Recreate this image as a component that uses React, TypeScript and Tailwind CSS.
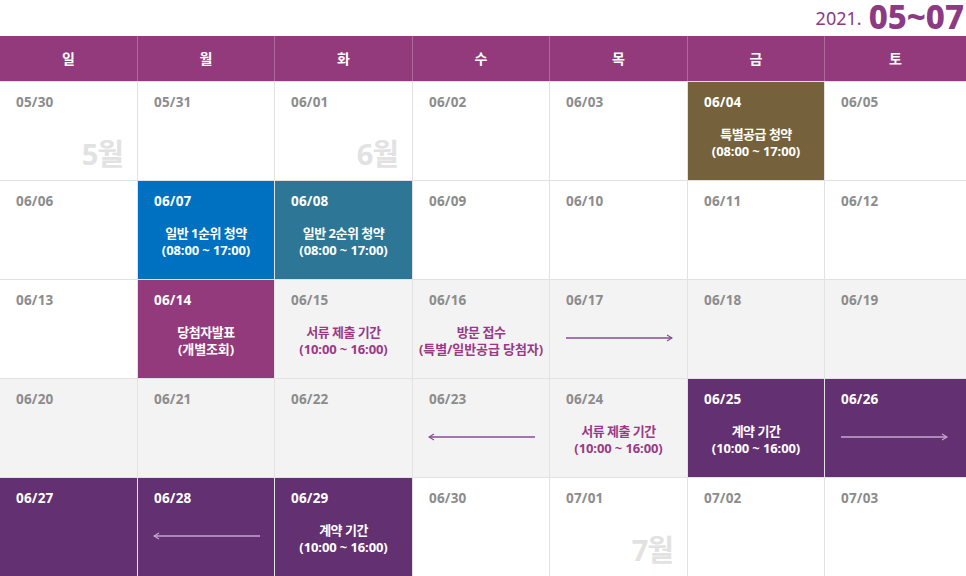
import React from "react";

// 청약 일정 캘린더
type Tone = "white" | "gray" | "olive" | "blue" | "teal" | "pink" | "purple";

type Day = {
    date: string;
    tone: Tone;
    title?: string;
    sub?: string;
    arrow?: "left" | "right";
    month?: string;
};

const toneClass: Record<Tone, string> = {
    white: "bg-white text-[#8c8c8c]",
    gray: "bg-[#f3f3f3] text-[#8c8c8c]",
    olive: "bg-[#75623d] text-white",
    blue: "bg-[#0070c0] text-white",
    teal: "bg-[#2d7696] text-white",
    pink: "bg-[#923a7c] text-white",
    purple: "bg-[#633071] text-white",
};

const weeks: Day[][] = [
    [
        { date: "05/30", tone: "white", month: "5월" },
        { date: "05/31", tone: "white" },
        { date: "06/01", tone: "white", month: "6월" },
        { date: "06/02", tone: "white" },
        { date: "06/03", tone: "white" },
        { date: "06/04", tone: "olive", title: "특별공급 청약", sub: "(08:00 ~ 17:00)" },
        { date: "06/05", tone: "white" },
    ],
    [
        { date: "06/06", tone: "white" },
        { date: "06/07", tone: "blue", title: "일반 1순위 청약", sub: "(08:00 ~ 17:00)" },
        { date: "06/08", tone: "teal", title: "일반 2순위 청약", sub: "(08:00 ~ 17:00)" },
        { date: "06/09", tone: "white" },
        { date: "06/10", tone: "white" },
        { date: "06/11", tone: "white" },
        { date: "06/12", tone: "white" },
    ],
    [
        { date: "06/13", tone: "white" },
        { date: "06/14", tone: "pink", title: "당첨자발표", sub: "(개별조회)" },
        { date: "06/15", tone: "gray", title: "서류 제출 기간", sub: "(10:00 ~ 16:00)" },
        { date: "06/16", tone: "gray", title: "방문 접수", sub: "(특별/일반공급 당첨자)" },
        { date: "06/17", tone: "gray", arrow: "right" },
        { date: "06/18", tone: "gray" },
        { date: "06/19", tone: "gray" },
    ],
    [
        { date: "06/20", tone: "gray" },
        { date: "06/21", tone: "gray" },
        { date: "06/22", tone: "gray" },
        { date: "06/23", tone: "gray", arrow: "left" },
        { date: "06/24", tone: "gray", title: "서류 제출 기간", sub: "(10:00 ~ 16:00)" },
        { date: "06/25", tone: "purple", title: "계약 기간", sub: "(10:00 ~ 16:00)" },
        { date: "06/26", tone: "purple", arrow: "right" },
    ],
    [
        { date: "06/27", tone: "purple" },
        { date: "06/28", tone: "purple", arrow: "left" },
        { date: "06/29", tone: "purple", title: "계약 기간", sub: "(10:00 ~ 16:00)" },
        { date: "06/30", tone: "white" },
        { date: "07/01", tone: "white", month: "7월" },
        { date: "07/02", tone: "white" },
        { date: "07/03", tone: "white" },
    ],
];

const dayNames = ["일", "월", "화", "수", "목", "금", "토"];

const cols = "grid grid-cols-[138px_137px_138px_137px_138px_137px_1fr]";

const Arrow = ({ dir, light }: { dir: "left" | "right"; light: boolean }) => {
    const color = light ? "#c9a6d3" : "#8a4a9a";
    return (
        <svg width="108" height="8" viewBox="0 0 108 8" className="mt-[26px] ml-[15px]">
            <line x1="1" y1="4" x2="107" y2="4" stroke={color} strokeWidth="1.4" />
            {dir === "right" ? (
                <path d="M102 1 L107 4 L102 7" fill="none" stroke={color} strokeWidth="1.2" />
            ) : (
                <path d="M6 1 L1 4 L6 7" fill="none" stroke={color} strokeWidth="1.2" />
            )}
        </svg>
    );
};

const Cell = ({ day, last }: { day: Day; last: boolean }) => {
    const dark = day.tone !== "white" && day.tone !== "gray";
    return (
        <div
            className={`flex h-[99px] flex-col border-t border-[#e2e2e2] ${last ? "" : "border-r"} ${toneClass[day.tone]}`}
        >
            <div className="pl-[16px] pt-[12px] text-[13.5px] font-bold leading-[16px] tracking-[0.2px]">
                {day.date}
            </div>
            {day.title && (
                <div
                    className={`mt-[15px] flex flex-col items-center text-center font-bold ${dark ? "text-white" : "text-[#9a3a86]"}`}
                >
                    <span className="text-[13px] leading-[18px] tracking-[-0.5px]">{day.title}</span>
                    <span className="text-[13px] leading-[17px] tracking-[-0.1px]">{day.sub}</span>
                </div>
            )}
            {day.arrow && <Arrow dir={day.arrow} light={dark} />}
            {day.month && (
                <div className="mt-auto mb-[10px] mr-[14px] self-end text-[29px] font-bold leading-[32px] tracking-[-1px] text-[#e2e2e2]">
                    {day.month}
                </div>
            )}
        </div>
    );
};

const App = () => {
    return (
        <div
            className="h-[576px] w-[966px] overflow-hidden bg-white"
            style={{ fontFamily: '"Noto Sans", "Noto Sans CJK KR", sans-serif' }}
        >
            <div className="flex h-[36px] items-start justify-end text-[#8b3a84]">
                <span className="mt-[7px] mr-[7px] text-[18px] leading-[22px]">2021.</span>
                <span className="mr-[2px] text-[33px] font-extrabold leading-[34px]">05~07</span>
            </div>
            <div className={`${cols} h-[45px] bg-[#933a7c]`}>
                {dayNames.map((d, i) => (
                    <div
                        key={d}
                        className={`flex items-center justify-center text-[14px] font-bold text-white ${i < 6 ? "border-r border-[#ad6a9c]" : ""}`}
                    >
                        {d}
                    </div>
                ))}
            </div>
            {weeks.map((week, wi) => (
                <div key={wi} className={cols}>
                    {week.map((day, di) => (
                        <Cell key={day.date} day={day} last={di === 6} />
                    ))}
                </div>
            ))}
        </div>
    );
};

export default App;
